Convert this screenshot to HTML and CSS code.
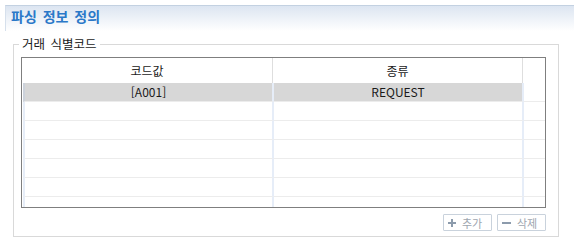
FILE: index.html
```html
<!DOCTYPE html>
<html lang="ko">
  <head>
    <meta charset="UTF-8" />
    <meta name="viewport" content="width=device-width, initial-scale=1.0" />
    <title>파싱 정보 정의</title>
    <link rel="stylesheet" href="styles.css">
  </head>
  <body>
    <div class="titulo">파싱 정보 정의</div>

    <fieldset class="grupo">
      <legend>거래 식별코드</legend>

      <div class="tabela">
        <div class="cabecalho">
          <div class="celula">코드값</div>
          <div class="celula">종류</div>
          <div class="celula vazia"></div>
        </div>
        <div class="corpo">
          <div class="linha selecionada">
            <div class="celula">[A001]</div>
            <div class="celula">REQUEST</div>
            <div class="celula vazia"></div>
          </div>
          <div class="linha">
            <div class="celula"></div>
            <div class="celula"></div>
            <div class="celula vazia"></div>
          </div>
          <div class="linha">
            <div class="celula"></div>
            <div class="celula"></div>
            <div class="celula vazia"></div>
          </div>
          <div class="linha">
            <div class="celula"></div>
            <div class="celula"></div>
            <div class="celula vazia"></div>
          </div>
          <div class="linha">
            <div class="celula"></div>
            <div class="celula"></div>
            <div class="celula vazia"></div>
          </div>
          <div class="linha">
            <div class="celula"></div>
            <div class="celula"></div>
            <div class="celula vazia"></div>
          </div>
          <div class="linha">
            <div class="celula"></div>
            <div class="celula"></div>
            <div class="celula vazia"></div>
          </div>
        </div>
      </div>

      <div class="botoes">
        <button type="button" disabled>
          <svg width="8" height="8" viewBox="0 0 8 8">
            <path d="M3 0h2v3h3v2H5v3H3V5H0V3h3z" fill="#8c9bac" />
          </svg>
          추가
        </button>
        <button type="button" disabled>
          <svg width="9" height="8" viewBox="0 0 9 8">
            <rect x="0" y="3" width="9" height="2" fill="#8c9bac" />
          </svg>
          삭제
        </button>
      </div>
    </fieldset>
  </body>
</html>
```

FILE: styles.css
```css
* {
  box-sizing: border-box;
}

body {
  margin: 0;
  background-color: white;
  font-family: "Noto Sans CJK KR", "Noto Sans", sans-serif;
  color: #1a1a1a;
}

.titulo {
  margin: 5px 0 0 5px;
  height: 26px;
  padding-left: 5px;
  border-top: 1px solid #c3d1e1;
  border-left: 1px solid #d6e0ec;
  background: linear-gradient(#dce5f1, #ffffff);
  color: #2a78c8;
  font-size: 14px;
  font-weight: bold;
  line-height: 20px;
  word-spacing: 2px;
}

.grupo {
  margin: 5px 15px 0 13px;
  padding: 5px 12px 5px 7px;
  border: 1px solid #d9d9d9;
}

.grupo legend {
  margin-left: -2px;
  padding: 0 3px;
  font-size: 12.5px;
  line-height: 16px;
  word-spacing: 2px;
}

.tabela {
  height: 151px;
  border: 1px solid #7f7f7f;
  overflow: hidden;
  font-size: 12px;
}

.cabecalho {
  display: grid;
  grid-template-columns: 251px 250px 1fr;
  height: 25px;
}

.cabecalho .celula {
  display: flex;
  justify-content: center;
  align-items: center;
  border-right: 1px solid #dedede;
}

.cabecalho .vazia {
  border-right: 0;
}

.linha {
  display: grid;
  grid-template-columns: 251px 250px 1fr;
  height: 19px;
  padding-left: 1px;
}

.linha .celula {
  display: flex;
  justify-content: center;
  align-items: center;
  height: 19px;
  border-bottom: 1px solid #ececec;
  border-right: 2px solid #e6edf8;
  line-height: 18px;
}

.linha .celula:first-child {
  border-left: 2px solid #e6edf8;
}

.linha .vazia {
  border-right: 0;
}

.selecionada .celula {
  background-color: #d7d7d7;
}

.selecionada .celula:first-child {
  border-left-color: #ccd2db;
}

.selecionada .vazia {
  background-color: white;
}

.botoes {
  display: flex;
  justify-content: flex-end;
  gap: 5px;
  margin-top: 6px;
}

button {
  display: flex;
  align-items: center;
  gap: 6px;
  width: 49px;
  height: 17px;
  padding: 0 0 0 4px;
  border: 1px solid #c9d2dc;
  border-radius: 1px;
  background-color: white;
  color: #9ea6af;
  font-family: "Noto Sans CJK KR", sans-serif;
  font-size: 11px;
}
```
